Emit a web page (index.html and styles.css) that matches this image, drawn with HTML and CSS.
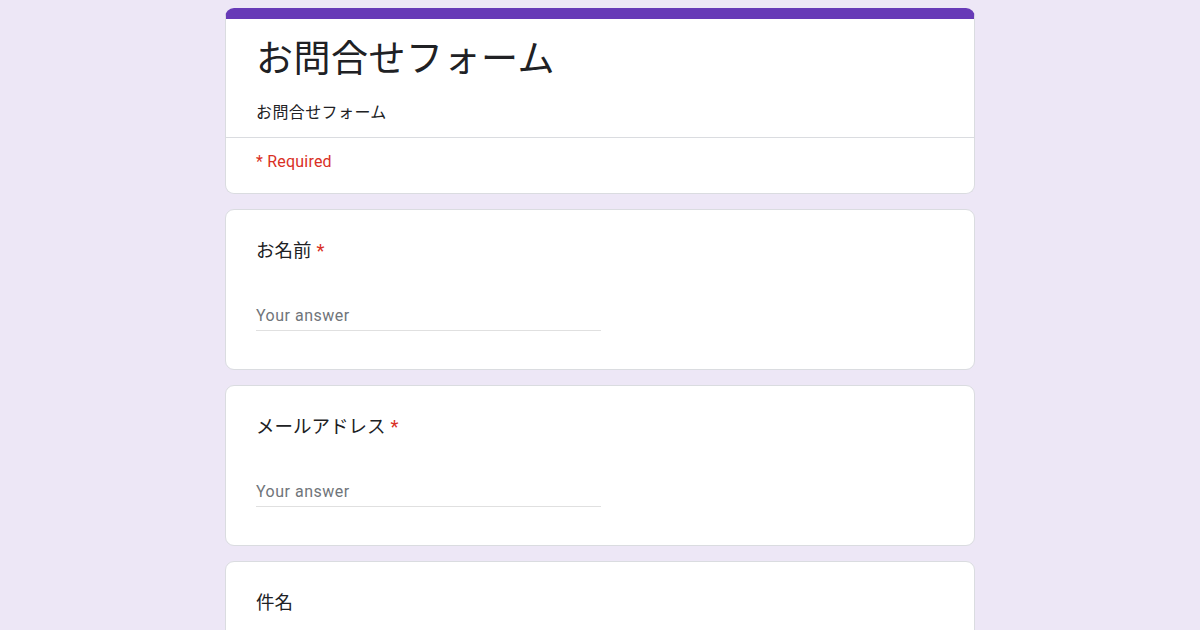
FILE: index.html
```html
<!DOCTYPE html>
<html lang="ja">
<head>
<meta charset="utf-8">
<title>お問合せフォーム</title>
<link rel="stylesheet" href="styles.css">
</head>
<body>
<main class="form">
  <section class="card header-card">
    <div class="header-top">
      <h1 class="form-title">お問合せフォーム</h1>
      <p class="form-desc">お問合せフォーム</p>
    </div>
    <div class="required-note">* Required</div>
  </section>

  <section class="card q-card">
    <div class="q-title">お名前<span class="star">*</span></div>
    <div class="answer">Your answer</div>
  </section>

  <section class="card q-card">
    <div class="q-title">メールアドレス<span class="star">*</span></div>
    <div class="answer">Your answer</div>
  </section>

  <section class="card q-card">
    <div class="q-title">件名</div>
    <div class="answer">Your answer</div>
  </section>
</main>
</body>
</html>
```

FILE: styles.css
```css
html, body {
  margin: 0;
  padding: 0;
  background: #ede7f6;
}
body {
  font-family: Roboto, "Noto Sans CJK JP", sans-serif;
  color: #202124;
  padding-top: 8px;
}
.form {
  width: 750px;
  margin: 0 auto;
  display: flex;
  flex-direction: column;
  gap: 15px;
}
.card {
  box-sizing: border-box;
  background: #fff;
  border: 1px solid #dadce0;
  border-radius: 9px;
}
.header-card {
  border-top: 11px solid #673ab7;
}
.header-top {
  padding: 13px 30px 14px;
  border-bottom: 1px solid #dadce0;
}
.form-title {
  margin: 0;
  font-family: "Noto Sans CJK JP", sans-serif;
  font-weight: 400;
  font-size: 37px;
  letter-spacing: 0.5px;
  line-height: 48px;
  color: #202124;
}
.form-desc {
  margin: 19px 0 0;
  font-family: "Noto Sans CJK JP", sans-serif;
  font-size: 16px;
  letter-spacing: 0.4px;
  line-height: 24px;
  color: #202124;
}
.required-note {
  padding: 12px 30px 19px;
  font-size: 16px;
  letter-spacing: 0.2px;
  line-height: 24px;
  color: #d93025;
}
.q-card {
  padding: 26px 30px 38px;
}
.q-title {
  font-family: "Noto Sans CJK JP", sans-serif;
  font-size: 18.5px;
  line-height: 27px;
  height: 27px;
  color: #202124;
}
.star {
  color: #d93025;
  margin-left: 5px;
  font-family: Roboto, sans-serif;
  line-height: 0;
}
.answer {
  margin-top: 41px;
  width: 345px;
  font-size: 16px;
  line-height: 24px;
  letter-spacing: 0.5px;
  padding-bottom: 2px;
  color: #70757a;
  border-bottom: 1px solid #e0e0e0;
}
```
